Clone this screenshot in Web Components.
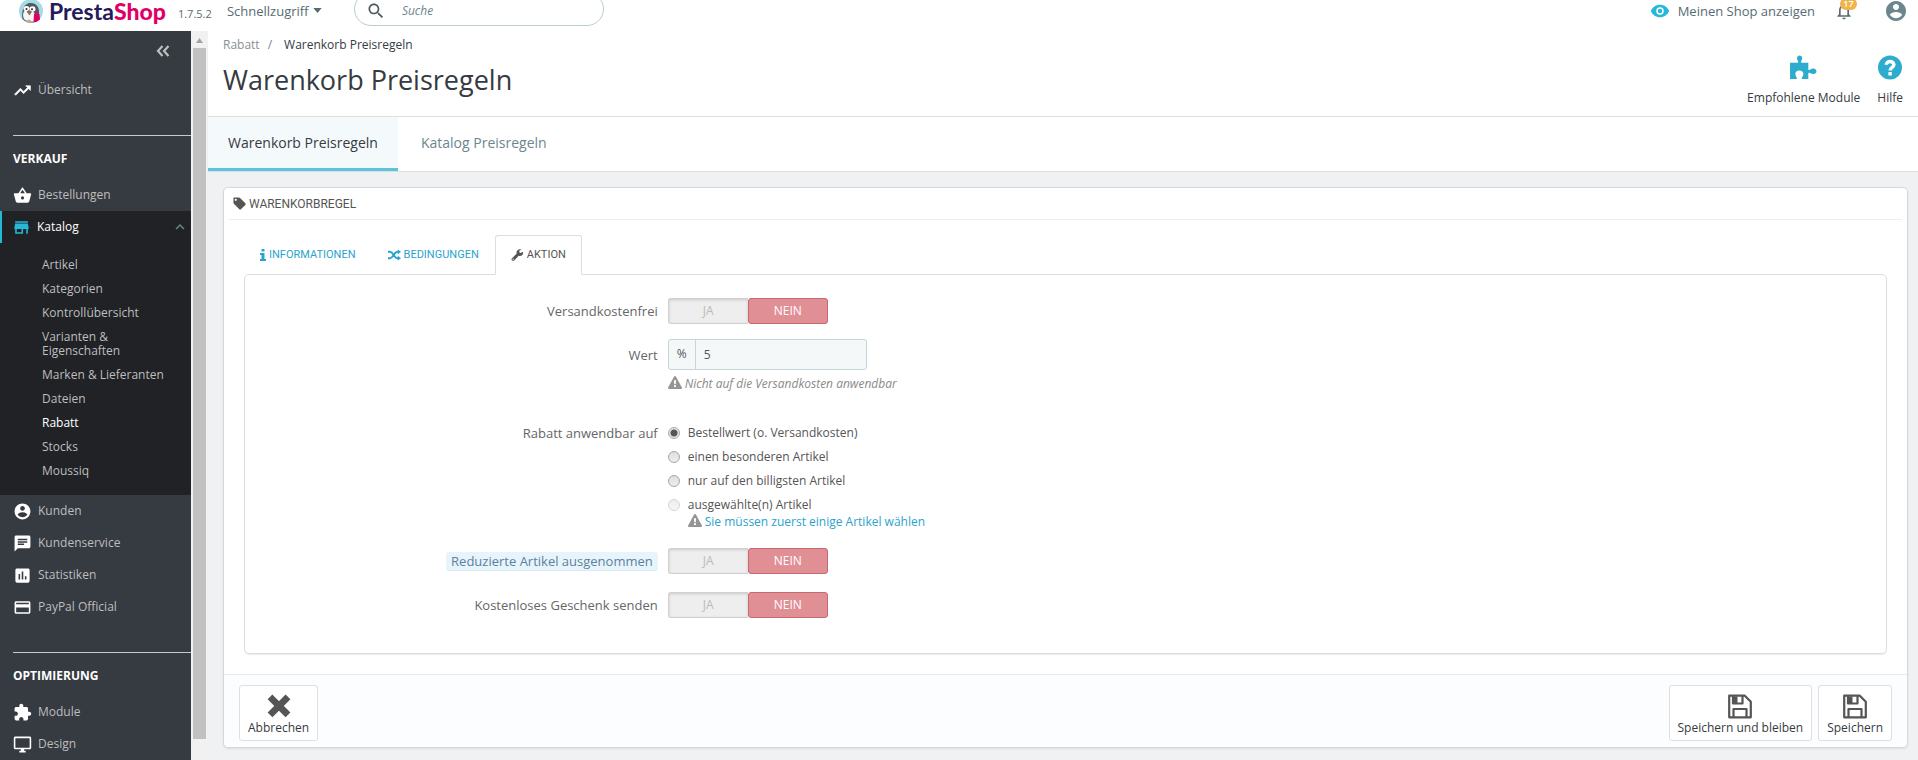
<!DOCTYPE html>
<html lang="de">
<head>
<meta charset="utf-8">
<meta name="viewport" content="width=device-width, initial-scale=1">
<title>Warenkorb Preisregeln</title>
<style>
  html, body { height: 100%; }

  body {
    --primary: #25b9d7;
    --link: #2ba3cc;
    --dark: #363a41;
    --darker: #202226;
    --line: #dddddd;

    display: flex;
    flex-direction: column;
    margin: 0;
    overflow: hidden;
    background: #eff1f2;
    color: #555;
    font: 12px/16px "Open Sans", "Noto Sans", sans-serif;
  }

  .layout { display: flex; flex: 1; min-height: 0; }
  main { flex: 1; min-width: 0; }
</style>
</head>
<body>
<ps-topbar version="1.7.5.2"></ps-topbar>

<div class="layout">
  <ps-sidebar>
    <ps-nav-item icon="trend">Übersicht</ps-nav-item>
    <ps-nav-section heading="Verkauf">
      <ps-nav-item icon="basket">Bestellungen</ps-nav-item>
      <ps-nav-item icon="store" open>Katalog
        <ps-nav-link slot="sub">Artikel</ps-nav-link>
        <ps-nav-link slot="sub">Kategorien</ps-nav-link>
        <ps-nav-link slot="sub">Kontrollübersicht</ps-nav-link>
        <ps-nav-link slot="sub">Varianten &amp; Eigenschaften</ps-nav-link>
        <ps-nav-link slot="sub">Marken &amp; Lieferanten</ps-nav-link>
        <ps-nav-link slot="sub">Dateien</ps-nav-link>
        <ps-nav-link slot="sub" current>Rabatt</ps-nav-link>
        <ps-nav-link slot="sub">Stocks</ps-nav-link>
        <ps-nav-link slot="sub">Moussiq</ps-nav-link>
      </ps-nav-item>
      <ps-nav-item icon="account">Kunden</ps-nav-item>
      <ps-nav-item icon="chat">Kundenservice</ps-nav-item>
      <ps-nav-item icon="stats">Statistiken</ps-nav-item>
      <ps-nav-item icon="card">PayPal Official</ps-nav-item>
    </ps-nav-section>
    <ps-nav-section heading="Optimierung">
      <ps-nav-item icon="extension">Module</ps-nav-item>
      <ps-nav-item icon="desktop">Design</ps-nav-item>
    </ps-nav-section>
  </ps-sidebar>

  <main>
    <ps-page-header parent="Rabatt" heading="Warenkorb Preisregeln">
      <ps-tool icon="puzzle">Empfohlene Module</ps-tool>
      <ps-tool icon="help">Hilfe</ps-tool>
    </ps-page-header>
    <ps-head-tabs>
      <ps-head-tab current>Warenkorb Preisregeln</ps-head-tab>
      <ps-head-tab>Katalog Preisregeln</ps-head-tab>
    </ps-head-tabs>

    <ps-panel heading="Warenkorbregel">
      <ps-tab slot="tabs" icon="info">Informationen</ps-tab>
      <ps-tab slot="tabs" icon="shuffle">Bedingungen</ps-tab>
      <ps-tab slot="tabs" icon="wrench" current>Aktion</ps-tab>

      <ps-switch-row label="Versandkostenfrei"></ps-switch-row>
      <ps-amount-row label="Wert" unit="%" value="5">Nicht auf die Versandkosten anwendbar</ps-amount-row>
      <ps-target-row label="Rabatt anwendbar auf"></ps-target-row>
      <ps-switch-row label="Reduzierte Artikel ausgenommen" hint></ps-switch-row>
      <ps-switch-row label="Kostenloses Geschenk senden"></ps-switch-row>

      <ps-action slot="footer" icon="times">Abbrechen</ps-action>
      <ps-action slot="footer-end" icon="floppy">Speichern und bleiben</ps-action>
      <ps-action slot="footer-end" icon="floppy">Speichern</ps-action>
    </ps-panel>
  </main>
</div>

<script>
// [viewBox, markup]
const ICONS = {
  trend: ["0 0 24 24", '<path d="M16 6l2.29 2.29-4.88 4.88-4-4L2 16.59 3.41 18l6-6 4 4 6.3-6.29L22 12V6z" stroke="currentColor" stroke-width=".8"/>'],
  basket: ["0 0 24 24", '<path d="M17.21 9l-4.38-6.56c-.19-.28-.51-.42-.83-.42-.32 0-.64.14-.83.43L6.79 9H2c-.55 0-1 .45-1 1 0 .09.01.18.04.27l2.54 9.27c.23.84 1 1.46 1.92 1.46h13c.92 0 1.69-.62 1.93-1.46l2.54-9.27L23 10c0-.55-.45-1-1-1h-4.79zM9 9l3-4.4L15 9H9zm3 8c-1.1 0-2-.9-2-2s.9-2 2-2 2 .9 2 2-.9 2-2 2z"/>'],
  store: ["0 0 24 24", '<path d="M20 4H4v2h16V4zm1 10v-2l-1-5H4l-1 5v2h1v6h10v-6h4v6h2v-6h1zm-9 4H6v-4h6v4z"/>'],
  account: ["0 0 24 24", '<path d="M12 2C6.48 2 2 6.48 2 12s4.48 10 10 10 10-4.48 10-10S17.52 2 12 2zm0 3c1.66 0 3 1.34 3 3s-1.34 3-3 3-3-1.34-3-3 1.34-3 3-3zm0 14.2c-2.5 0-4.71-1.28-6-3.22.03-1.99 4-3.08 6-3.08 1.99 0 5.97 1.09 6 3.08-1.29 1.94-3.5 3.22-6 3.22z"/>'],
  chat: ["0 0 24 24", '<path d="M20 2H4c-1.1 0-1.99.9-1.99 2L2 22l4-4h14c1.1 0 2-.9 2-2V4c0-1.1-.9-2-2-2zM6 9h12v2H6V9zm8 5H6v-2h8v2zm4-6H6V6h12v2z"/>'],
  stats: ["0 0 24 24", '<path d="M19 3H5c-1.1 0-2 .9-2 2v14c0 1.1.9 2 2 2h14c1.1 0 2-.9 2-2V5c0-1.1-.9-2-2-2zM9 17H7v-7h2v7zm4 0h-2V7h2v10zm4 0h-2v-4h2v4z"/>'],
  card: ["0 0 24 24", '<path d="M20 4H4c-1.11 0-1.99.89-1.99 2L2 18c0 1.11.89 2 2 2h16c1.11 0 2-.89 2-2V6c0-1.11-.89-2-2-2zm0 14H4v-6h16v6zm0-10H4V6h16v2z"/>'],
  extension: ["0 0 24 24", '<path d="M20.5 11H19V7c0-1.1-.9-2-2-2h-4V3.5C13 2.12 11.88 1 10.5 1S8 2.12 8 3.5V5H4c-1.1 0-1.99.9-1.99 2v3.8H3.5c1.49 0 2.7 1.21 2.7 2.7s-1.21 2.7-2.7 2.7H2V20c0 1.1.9 2 2 2h3.8v-1.5c0-1.49 1.21-2.7 2.7-2.7 1.49 0 2.7 1.21 2.7 2.7V22H17c1.1 0 2-.9 2-2v-4h1.5c1.38 0 2.5-1.12 2.5-2.5S21.88 11 20.5 11z"/>'],
  desktop: ["0 0 24 24", '<path d="M21 2H3c-1.1 0-2 .9-2 2v12c0 1.1.9 2 2 2h7v2H8v2h8v-2h-2v-2h7c1.1 0 2-.9 2-2V4c0-1.1-.9-2-2-2zm0 14H3V4h18v12z"/>'],
  eye: ["0 0 24 24", '<path d="M12 4.500C7 4.500 2.730 7.610 1 12c1.730 4.390 6 7.500 11 7.500s9.270-3.110 11-7.500c-1.730-4.390-6-7.500-11-7.500zM12 16.500a4.500 4.500 0 1 1 0-9 4.500 4.500 0 0 1 0 9z" fill-rule="evenodd"/><circle cx="12" cy="12" r="2.700"/>'],
  bell: ["0 0 24 24", '<path d="M12 22c1.1 0 2-.9 2-2h-4c0 1.1.89 2 2 2zm6-6v-5c0-3.07-1.64-5.64-4.5-6.32V4c0-.83-.67-1.5-1.5-1.5s-1.5.67-1.5 1.5v.68C7.63 5.36 6 7.92 6 11v5l-2 2v1h16v-1l-2-2zm-2 1H8v-6c0-2.48 1.51-4.5 4-4.5s4 2.02 4 4.5v6z"/>'],
  search: ["0 0 24 24", '<path d="M15.5 14h-.79l-.28-.27C15.41 12.59 16 11.11 16 9.5 16 5.91 13.09 3 9.5 3S3 5.91 3 9.5 5.91 16 9.5 16c1.61 0 3.09-.59 4.23-1.57l.27.28v.79l5 4.99L20.49 19l-4.99-5zm-6 0C7.01 14 5 11.99 5 9.5S7.01 5 9.5 5 14 7.01 14 9.5 11.99 14 9.5 14z"/>'],
  up: ["0 0 24 24", '<path d="M7.41 15.41L12 10.83l4.59 4.58L18 14l-6-6-6 6z"/>'],
  collapse: ["0 0 16 16", '<path d="M7.500 3L3 8l4.500 5M13.500 3L9 8l4.500 5" fill="none" stroke="currentColor" stroke-width="2.200"/>'],
  caret: ["0 0 10 6", '<path d="M0 0h10L5 6z"/>'],
  puzzle: ["0 0 28 26", '<path d="M0 8h7.500c1.200 0 1.300-1 .8-1.800C6.300 3.600 7.500.5 10 .5s3.700 3.100 1.700 5.700c-.5.8-.4 1.800.8 1.800H19v6.500c0 1.200 1 1.400 1.800.8 3.200-2.300 6.700-1 6.700 1.700s-3.500 4-6.700 1.700c-.8-.6-1.800-.4-1.800.8V25h-6c-1 0-1-.9-.5-1.700 1-1.700 1.500-2.600 1.300-4C13.500 17.300 12 16.200 9.700 16.200s-3.900 1.100-4.100 3.100c-.2 1.400.3 2.300 1.200 4 .5.800.4 1.700-.6 1.700H0z"/>'],
  help: ["0 0 24 24", '<circle cx="12" cy="12" r="12"/><path d="M8.200 9.200C8.300 4.900 15.900 5 15.900 9.200c0 2.800-3.800 2.600-3.800 5.800" fill="none" stroke="#fff" stroke-width="3.400"/><path d="M10.400 16.600h3.400V20h-3.400z" fill="#fff"/>'],
  tag: ["0 0 14 14", '<path fill-rule="evenodd" d="M1 .5h5.200c.5 0 1 .2 1.400.6l5.700 5.700c.5.500.5 1.200 0 1.700l-4.800 4.800c-.5.500-1.200.5-1.700 0L1.100 7.600C.7 7.200.5 6.700.5 6.200V1c0-.3.2-.5.5-.5zm2 1.300a1.200 1.200 0 1 0 0 2.400 1.200 1.200 0 0 0 0-2.400z"/>'],
  info: ["0 0 6 12", '<path d="M1.500 0h3v2.600h-3zM0 4h4.500v6H6v2H0v-2h1.500V6H0z"/>'],
  shuffle: ["0 0 14 12", '<path d="M0 2.500h2.200c3.500 0 4.300 7 8 7H12M0 9.500h2.200c3.500 0 4.300-7 8-7H12" fill="none" stroke="currentColor" stroke-width="2"/><path d="M10.500 0l3.500 2.500-3.500 2.700zM10.500 6.800L14 9.500 10.500 12z"/>'],
  wrench: ["0 0 14 14", '<path fill-rule="evenodd" d="M13.300 3.300L10.900 4.700 9.100 3.700V2l2.400-1.500C9.200-.5 5.800.7 5.800 4.300c0 .4.100.8.200 1.100L.6 10.800c-.8.8-.8 1.800 0 2.500.7.700 1.800.7 2.500 0l5.300-5.400c3.700 1 6-1.800 4.900-4.600zM1.900 12.600a.7.700 0 1 1 0-1.400.7.700 0 0 1 0 1.400z"/>'],
  warning: ["0 0 14 14", '<path fill-rule="evenodd" d="M6.100.6c.4-.8 1.400-.8 1.800 0l6 11c.4.700-.1 1.400-.9 1.400H1c-.8 0-1.300-.7-.9-1.400zM5.900 4.300l.3 4h1.600l.3-4zM6 9.300v1.700h2V9.300z"/>'],
  times: ["0 0 20 20", '<path d="M4.500 4l11 11M15.500 4l-11 11" fill="none" stroke="currentColor" stroke-width="5.600" stroke-linecap="square"/>'],
  floppy: ["0 0 24 24", '<path d="M1.200 1.200h15.600l6 6v15.600H1.200zM5.500 22V14.500h13V22M5 1.500v7.500h9.500V1.500" fill="none" stroke="currentColor" stroke-width="2.200" stroke-linejoin="round"/><path d="M5 2h4.500v7H5z"/>'],
};

const icon = (name, width, height = width) =>
  `<svg width="${width}" height="${height}" viewBox="${ICONS[name][0]}" fill="currentColor" aria-hidden="true">${ICONS[name][1]}</svg>`;

const BASE = `
  *, *::before { box-sizing: border-box; }
  svg { display: block; flex: none; }
  a { color: inherit; text-decoration: none; }
  button, input { font: inherit; color: inherit; }
  h1, h2, p { margin: 0; }
`;

class PSElement extends HTMLElement {
  connectedCallback() {
    if (this.shadowRoot) return;
    this.attachShadow({ mode: "open" }).innerHTML = `<style>${BASE}${this.styles()}</style>${this.render()}`;
  }

  attr(name) {
    return this.getAttribute(name) ?? "";
  }
}

class PSTopbar extends PSElement {
  styles() {
    return `
      :host { display: block; height: 31px; background: #fff; flex: none; }
      header { display: flex; align-items: center; height: 100%; padding: 0 10px 10px 19px; color: #576c72; font-size: 13px; }
      .logo { display: flex; align-items: center; gap: 6px; color: #251b5b; font: 700 23px/20px Lato, sans-serif; }
      .logo b { color: #df0067; margin-left: -6px; }
      .version { margin: 6px 0 0 12px; width: 49px; font-size: 11px; }
      .quick { display: flex; align-items: center; gap: 4px; width: 127px; padding: 0; border: 0; background: none; }
      .search { display: flex; align-items: center; width: 250px; height: 34px; margin-top: -4px; padding: 4px 11px 0; gap: 16px; flex: none;
                border: 1px solid #bbcdd2; border-radius: 17px; color: #4d5a5f; }
      input { flex: 1; min-width: 0; padding: 0; border: 0; outline: 0; background: none; font: italic 12px/16px "Open Sans", sans-serif; }
      input::placeholder { color: #6c868e; opacity: 1; }
      .shop { display: flex; align-items: center; gap: 8px; margin-left: auto; }
      .shop svg { color: var(--primary); }
      .bell { position: relative; margin-left: 19px; padding: 0; border: 0; background: none; }
      .bell span { position: absolute; left: 6px; top: -3px; width: 17px; height: 12px; border-radius: 6px; background: #f0b54a; color: #fff; font: 600 9px/12px "Open Sans", sans-serif; }
      .user { margin-left: 30px; padding: 0; border: 0; background: none; color: #6c868e; }
    `;
  }

  render() {
    return `
      <header>
        <a class="logo" href="#">
          <svg width="24" height="24" viewBox="0 0 24 24" aria-hidden="true">
            <circle cx="12" cy="12" r="12" fill="#a4dbe8"/>
            <path d="M3.500 20C2 12 5 4.500 11 4c6-.4 9 4 9 9l-2 9c-4 2.500-11 2-14.500-2z" fill="#55585c"/>
            <path d="M5 20c-2-5-.5-9 3-9 5-.5 8 2 8 6l-1 5.500c-3 1-7.500.5-10-2.500z" fill="#f4f6f6"/>
            <ellipse cx="7.500" cy="9.500" rx="3" ry="2.600" fill="#fff"/>
            <ellipse cx="13.500" cy="10" rx="3" ry="2.800" fill="#fff"/>
            <circle cx="7.500" cy="10" r="1" fill="#27272b"/><circle cx="13" cy="10.200" r="1" fill="#27272b"/>
            <path d="M7.500 12.500l2.500-1.500 3 1.500-2.500 4z" fill="#8a6f5e"/>
            <path d="M15 15h5.500l.5 5.500-3.500 2.500h-3z" fill="#df0067"/>
            <path d="M16.500 15c0-3.500 3-3.500 3 0" fill="none" stroke="#df0067"/>
            <path d="M6 22l4-1.500 4 2.500c-3 1.300-6 1-8-1z" fill="#c9a48a"/>
          </svg>
          Presta<b>Shop</b>
        </a>
        <span class="version">${this.attr("version")}</span>
        <button class="quick">Schnellzugriff ${icon("caret", 9, 5)}</button>
        <label class="search">${icon("search", 20)}<input type="search" placeholder="Suche" aria-label="Suche"></label>
        <a class="shop" href="#">${icon("eye", 20)}Meinen Shop anzeigen</a>
        <button class="bell" aria-label="Benachrichtigungen">${icon("bell", 20)}<span>17</span></button>
        <button class="user" aria-label="Profil">${icon("account", 24)}</button>
      </header>
    `;
  }
}

class PSSidebar extends PSElement {
  styles() {
    return `
      :host { display: flex; flex: none; width: 208px; overflow: hidden; }
      nav { flex: 1; padding-top: 12px; background: var(--dark); color: #bebebe; }
      .collapse { display: block; margin: 0 20px 15px auto; padding: 0; border: 0; background: none; }
      .bar { width: 17px; padding: 0 2px; background: #f1f1f1; color: #a3a3a3; }
      .bar svg { margin: 7px auto 5px; }
      .thumb { height: calc(100% - 38px); background: #c1c1c1; }
    `;
  }

  render() {
    return `
      <nav>
        <button class="collapse" aria-label="Menü einklappen">${icon("collapse", 16)}</button>
        <slot></slot>
      </nav>
      <div class="bar">
        <svg width="7" height="5" viewBox="0 0 7 5" fill="currentColor"><path d="M0 5h7L3.500 0z"/></svg>
        <div class="thumb"></div>
      </div>
    `;
  }
}

class PSNavSection extends PSElement {
  styles() {
    return `
      :host { display: block; padding-top: 29px; }
      h2 { margin-left: 13px; padding: 15px 0 12px; border-top: 1px solid #bbcdd2; color: #fff; font: 700 12px/16px "Open Sans", sans-serif; text-transform: uppercase; }
    `;
  }

  render() {
    return `<h2>${this.attr("heading")}</h2><slot></slot>`;
  }
}

class PSNavItem extends PSElement {
  styles() {
    return `
      :host { display: block; }
      a { display: flex; align-items: center; gap: 6px; height: 32px; padding-left: 13px; }
      svg { color: #fff; }
      :host([open]) { background: var(--darker); }
      :host([open]) a { padding: 0 2px 0 10px; border-left: 2px solid var(--primary); color: #fff; font-weight: 500; }
      :host([open]) svg { color: var(--primary); }
      :host([open]) svg:last-child { margin-left: auto; color: #6c868e; }
      .sub { padding: 10px 20px 12px 42px; }
    `;
  }

  render() {
    const open = this.hasAttribute("open");
    return `
      <a href="#">${icon(this.attr("icon"), 19)}<span><slot></slot></span>${open ? icon("up", 18) : ""}</a>
      ${open ? '<div class="sub"><slot name="sub"></slot></div>' : ""}
    `;
  }
}

class PSNavLink extends PSElement {
  styles() {
    return `
      :host { display: block; padding: 5px 0; line-height: 14px; color: #bebebe; font-weight: 400; }
      :host([current]) { color: #fff; font-weight: 500; }
    `;
  }

  render() {
    return `<a href="#"><slot></slot></a>`;
  }
}

class PSPageHeader extends PSElement {
  styles() {
    return `
      :host { display: flex; justify-content: space-between; height: 86px; padding: 6px 15px 0; background: #fff; border-bottom: 1px solid var(--line); box-sizing: border-box; color: #363a41; }
      .crumbs { display: flex; gap: 8px; }
      .crumbs a { color: #8a8f91; }
      .crumbs span { color: #6c868e; }
      .crumbs b { margin-left: 4px; font-weight: 400; }
      h1 { margin-top: 9px; font: 400 27px/36px "Open Sans", sans-serif; }
      .tools { display: flex; align-items: flex-start; gap: 17px; padding-top: 18px; }
    `;
  }

  render() {
    return `
      <div>
        <div class="crumbs"><a href="#">${this.attr("parent")}</a><span>/</span><b>${this.attr("heading")}</b></div>
        <h1>${this.attr("heading")}</h1>
      </div>
      <div class="tools"><slot></slot></div>
    `;
  }
}

class PSTool extends PSElement {
  styles() {
    return `
      :host { display: block; }
      a { display: flex; flex-direction: column; align-items: center; gap: 10px; color: #363a41; }
      svg { color: #2eacce; }
    `;
  }

  render() {
    const name = this.attr("icon");
    return `<a href="#">${icon(name, name === "help" ? 24 : 27, 25)}<slot></slot></a>`;
  }
}

class PSHeadTabs extends PSElement {
  styles() {
    return `:host { display: flex; height: 55px; background: #fff; border-bottom: 1px solid var(--line); box-sizing: border-box; }`;
  }

  render() {
    return "<slot></slot>";
  }
}

class PSHeadTab extends PSElement {
  styles() {
    return `
      :host { display: block; color: #6c868e; font-size: 14px; line-height: 52px; }
      :host([current]) { background: #f4f9fc; color: #363a41; box-shadow: inset 0 -3px #5bc4d9; margin-right: 3px; }
      a { display: block; padding: 0 20px; }
    `;
  }

  render() {
    return `<a href="#"><slot></slot></a>`;
  }
}

class PSPanel extends PSElement {
  styles() {
    return `
      :host { display: block; margin: 15px 10px 0 15px; border: 1px solid #d3d8db; border-radius: 5px; background: #fff; box-shadow: 0 1px 2px rgba(0, 0, 0, .08); }
      h2 { display: flex; align-items: center; gap: 3px; height: 32px; margin: 0 5px; padding-left: 4px; border-bottom: 1px solid #eee;
           font: 400 12px/16px Roboto, sans-serif; text-transform: uppercase; }
      .tabs { display: flex; margin: 15px 20px -1px; }
      .body { margin: 0 20px; padding: 23px 15px 20px; border: 1px solid var(--line); border-radius: 5px; box-shadow: 0 1px 1px rgba(0, 0, 0, .08); }
      footer { display: flex; gap: 6px; margin-top: 20px; padding: 10px 15px 6px; border-top: 1px solid #e6ebee; border-radius: 0 0 5px 5px; background: #fcfdfe; }
      .end { display: flex; gap: 6px; margin-left: auto; }
    `;
  }

  render() {
    return `
      <h2>${icon("tag", 13)}${this.attr("heading")}</h2>
      <div class="tabs"><slot name="tabs"></slot></div>
      <div class="body"><slot></slot></div>
      <footer><slot name="footer"></slot><div class="end"><slot name="footer-end"></slot></div></footer>
    `;
  }
}

class PSTab extends PSElement {
  styles() {
    return `
      :host { display: block; border: 1px solid transparent; color: var(--link); font: 400 11px/16px Roboto, sans-serif; text-transform: uppercase; }
      :host([current]) { position: relative; border-color: var(--line); border-bottom-color: #fff; border-radius: 3px 3px 0 0; background: #fff; color: #555; }
      a { display: flex; align-items: center; gap: 3px; height: 38px; padding: 0 15px; }
    `;
  }

  render() {
    const name = this.attr("icon");
    return `<a href="#">${icon(name, name === "info" ? 6 : 13, 12)}<slot></slot></a>`;
  }
}

// Shared by every row of the form: a quarter for the label, the rest for the control.
const ROW = `
  :host { display: grid; grid-template-columns: minmax(0, 1fr) minmax(0, 3fr); }
  .label { padding: 4px 5px 0; font-size: 13px; line-height: 18px; text-align: right; color: #666; }
  .control { padding: 0 5px; }
  .help { display: flex; align-items: flex-start; gap: 3px; }
  .help svg { color: #959595; }
`;

class PSSwitchRow extends PSElement {
  styles() {
    return `${ROW}
      :host { margin-bottom: 15px; }
      :host([hint]) { margin-bottom: 18px; }
      :host([hint]) .label span { display: inline-block; padding: 0 5px; background: #e8f4fb; color: #5a82a0; border-bottom: 1px solid #d9ebf5; border-radius: 3px; }
      .switch { display: grid; grid-template-columns: 80px 80px; height: 26px; position: relative; }
      input { position: absolute; opacity: 0; margin: 0; }
      .switch label { border: 1px solid #d0d0d0; background: #eee; color: #bbb; font-size: 12px; line-height: 24px; text-align: center; text-transform: uppercase; box-shadow: inset 0 1px 3px rgba(0, 0, 0, .15); }
      .switch .yes { border-right: 0; border-radius: 3px 0 0 3px; }
      .switch input:checked + label { border: 1px solid #c9696f; border-radius: 3px; background: #e08f95; color: #fff; box-shadow: none; }
    `;
  }

  render() {
    return `
      <div class="label" id="label"><span>${this.attr("label")}</span></div>
      <div class="control">
        <div class="switch" role="radiogroup" aria-labelledby="label">
          <input type="radio" name="state" id="on"><label class="yes" for="on">Ja</label>
          <input type="radio" name="state" id="off" checked><label for="off">Nein</label>
        </div>
      </div>
    `;
  }
}

class PSAmountRow extends PSElement {
  styles() {
    return `${ROW}
      :host { margin-bottom: 33px; }
      .label { padding-top: 7px; }
      .group { display: flex; width: 199px; height: 31px; border: 1px solid #c7d6db; border-radius: 3px; background: #f5f8f9; }
      .unit { width: 27px; border-right: 1px solid #c7d6db; line-height: 28px; text-align: center; }
      input { flex: 1; min-width: 0; padding: 0 8px; border: 0; outline: 0; background: none; }
      .help { margin-top: 6px; color: #8a8a8a; font-style: italic; }
    `;
  }

  render() {
    return `
      <label class="label" for="amount">${this.attr("label")}</label>
      <div class="control">
        <div class="group"><span class="unit">${this.attr("unit")}</span><input id="amount" type="text" value="${this.attr("value")}"></div>
        <p class="help">${icon("warning", 14)}<slot></slot></p>
      </div>
    `;
  }
}

class PSTargetRow extends PSElement {
  styles() {
    return `${ROW}
      :host { margin-bottom: 18px; }
      .label { padding-top: 0; line-height: 16px; }
      .option { display: flex; align-items: center; gap: 8px; height: 16px; margin-bottom: 8px; }
      .option:last-of-type { margin-bottom: 1px; }
      input { appearance: none; width: 12px; height: 12px; margin: 0; border: 1px solid #aaa; border-radius: 50%; background: linear-gradient(#ddd, #eee); }
      input:checked { background: radial-gradient(circle, #555 0 3px, #e4e4e4 4px); }
      input:disabled { opacity: .5; }
      .help { margin-left: 20px; color: var(--link); }
    `;
  }

  render() {
    const options = ["Bestellwert (o. Versandkosten)", "einen besonderen Artikel", "nur auf den billigsten Artikel", "ausgewählte(n) Artikel"];
    return `
      <div class="label" id="label">${this.attr("label")}</div>
      <div class="control" role="radiogroup" aria-labelledby="label">
        ${options.map((text, i) => `
          <label class="option"><input type="radio" name="target"${i === 0 ? " checked" : ""}${i === 3 ? " disabled" : ""}>${text}</label>
        `).join("")}
        <a class="help" href="#">${icon("warning", 14)}Sie müssen zuerst einige Artikel wählen</a>
      </div>
    `;
  }
}

class PSAction extends PSElement {
  styles() {
    return `
      :host { display: block; }
      button { display: flex; flex-direction: column; align-items: center; gap: 1px; height: 56px; padding: 8px 8px 0; border: 1px solid #dddfe2; border-radius: 3px; background: #fff; color: #363a41; }
      svg { color: #555; }
    `;
  }

  render() {
    return `<button type="button">${icon(this.attr("icon"), 24, 25)}<slot></slot></button>`;
  }
}

customElements.define("ps-topbar", PSTopbar);
customElements.define("ps-sidebar", PSSidebar);
customElements.define("ps-nav-section", PSNavSection);
customElements.define("ps-nav-item", PSNavItem);
customElements.define("ps-nav-link", PSNavLink);
customElements.define("ps-page-header", PSPageHeader);
customElements.define("ps-tool", PSTool);
customElements.define("ps-head-tabs", PSHeadTabs);
customElements.define("ps-head-tab", PSHeadTab);
customElements.define("ps-panel", PSPanel);
customElements.define("ps-tab", PSTab);
customElements.define("ps-switch-row", PSSwitchRow);
customElements.define("ps-amount-row", PSAmountRow);
customElements.define("ps-target-row", PSTargetRow);
customElements.define("ps-action", PSAction);
</script>
</body>
</html>
